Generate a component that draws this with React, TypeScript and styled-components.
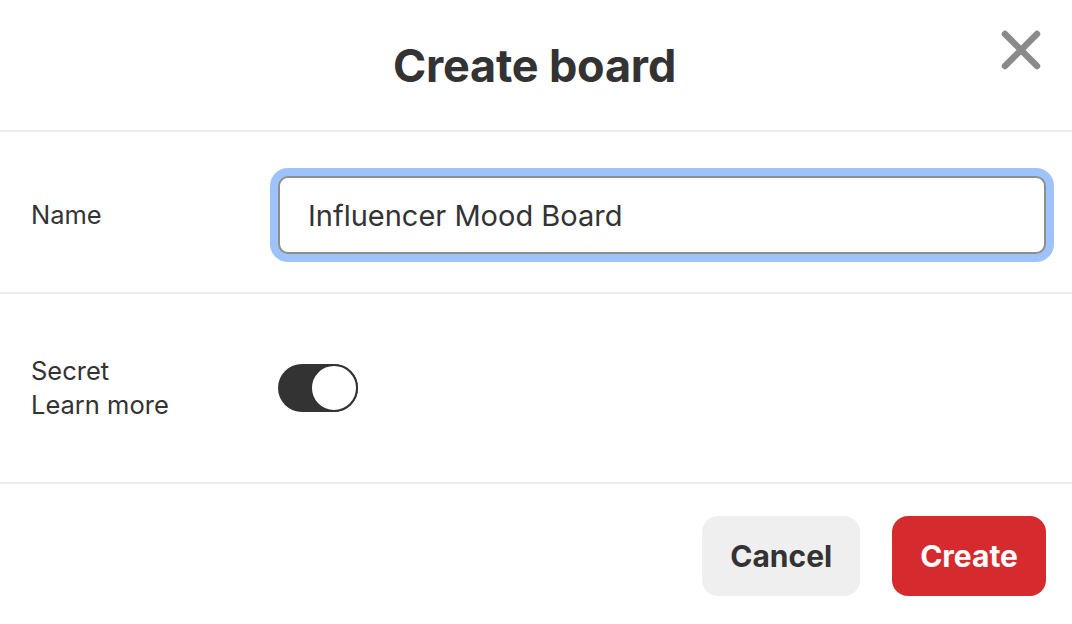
import React from 'react'
import styled, { createGlobalStyle } from 'styled-components'

const GlobalStyle = createGlobalStyle`
  html, body {
    margin: 0;
    padding: 0;
    background: #fff;
  }
  body {
    font-family: Inter, "Noto Sans", "Liberation Sans", sans-serif;
    color: #333;
  }
`

export default function App() {
  return (
    <>
      <GlobalStyle />
      <Modal>
        <Header>
          <Title>Create board</Title>
          <CloseButton aria-label="Close">
            <svg width="40" height="40" viewBox="0 0 40 40">
              <path d="M4 4 L36 36 M36 4 L4 36" stroke="#8a8a8a" strokeWidth="6.5" strokeLinecap="round" />
            </svg>
          </CloseButton>
        </Header>
        <Row $height={162} $offset={6}>
          <Label>Name</Label>
          <Field>
            <NameInput defaultValue="Influencer Mood Board" />
          </Field>
        </Row>
        <Row $height={190} $offset={0}>
          <Label>
            Secret
            <br />
            Learn more
          </Label>
          <Field>
            <Toggle role="switch" aria-checked="true">
              <Knob />
            </Toggle>
          </Field>
        </Row>
        <Footer>
          <Button $variant="gray">Cancel</Button>
          <Button $variant="red">Create</Button>
        </Footer>
      </Modal>
    </>
  )
}

const Modal = styled.div`
  width: 1072px;
  height: 624px;
  display: flex;
  flex-direction: column;
  background: #fff;
`

const Header = styled.header`
  position: relative;
  height: 132px;
  display: flex;
  align-items: center;
  justify-content: center;
  padding-right: 3px;
  border-bottom: 2px solid #ececec;
  box-sizing: border-box;
  flex-shrink: 0;
`

const Title = styled.h1`
  margin: 0;
  font-size: 45px;
  font-weight: 700;
  color: #333;
  letter-spacing: -0.2px;
`

const CloseButton = styled.button`
  position: absolute;
  right: 31px;
  top: 30px;
  width: 40px;
  height: 40px;
  padding: 0;
  border: none;
  background: none;
  display: flex;
  align-items: center;
  justify-content: center;
  cursor: pointer;
`

const Row = styled.div<{ $height: number; $offset: number }>`
  height: ${p => p.$height}px;
  padding-top: ${p => p.$offset}px;
  display: flex;
  align-items: center;
  border-bottom: 2px solid #ececec;
  box-sizing: border-box;
  flex-shrink: 0;
`

const Label = styled.div`
  width: 278px;
  padding-left: 31px;
  box-sizing: border-box;
  font-size: 25.5px;
  line-height: 34px;
  color: #333;
  flex-shrink: 0;
`

const Field = styled.div`
  flex: 1;
  padding-right: 26px;
  display: flex;
  align-items: center;
`

const NameInput = styled.input`
  width: 100%;
  height: 78px;
  box-sizing: border-box;
  border: 2px solid #8e8e8e;
  border-radius: 10px;
  box-shadow: 0 0 0 8px #9ec3fa;
  padding: 0 28px;
  font-family: inherit;
  font-size: 29px;
  color: #333;
  outline: none;
  background: #fff;
`

const Toggle = styled.div`
  width: 80px;
  height: 48px;
  border-radius: 24px;
  background: #333;
  display: flex;
  align-items: center;
  justify-content: flex-end;
`

const Knob = styled.div`
  width: 48px;
  height: 48px;
  border-radius: 50%;
  box-sizing: border-box;
  background: #fff;
  border: 2px solid #333;
`

const Footer = styled.footer`
  flex: 1;
  display: flex;
  align-items: center;
  justify-content: flex-end;
  gap: 32px;
  padding: 4px 26px 0 0;
`

const Button = styled.button<{ $variant: 'gray' | 'red' }>`
  height: 80px;
  padding: 0 28px;
  border: none;
  border-radius: 16px;
  font-family: inherit;
  font-size: 30px;
  font-weight: 700;
  cursor: pointer;
  background: ${p => (p.$variant === 'red' ? '#d52b2f' : '#efefef')};
  color: ${p => (p.$variant === 'red' ? '#fff' : '#333')};
`
